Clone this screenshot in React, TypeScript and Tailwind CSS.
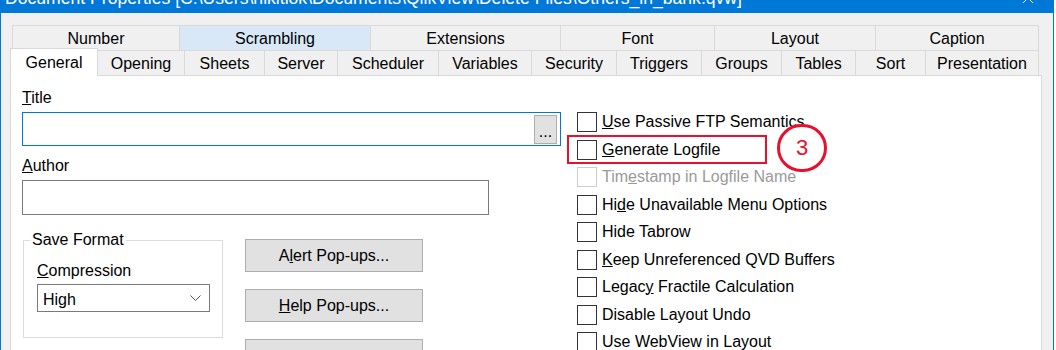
import React from 'react'

const topTabs = [
  { label: 'Number', w: 'w-[167px]' },
  { label: 'Scrambling', w: 'w-[191px]', hover: true },
  { label: 'Extensions', w: 'w-[190px]' },
  { label: 'Font', w: 'w-[154px]' },
  { label: 'Layout', w: 'w-[161px]' },
  { label: 'Caption', w: 'w-[164px]' },
]

const bottomTabs = [
  { label: 'Opening', w: 'w-[86px]' },
  { label: 'Sheets', w: 'w-[80px]' },
  { label: 'Server', w: 'w-[73px]' },
  { label: 'Scheduler', w: 'w-[101px]' },
  { label: 'Variables', w: 'w-[93px]' },
  { label: 'Security', w: 'w-[85px]' },
  { label: 'Triggers', w: 'w-[85px]' },
  { label: 'Groups', w: 'w-[80px]' },
  { label: 'Tables', w: 'w-[74px]' },
  { label: 'Sort', w: 'w-[70px]' },
  { label: 'Presentation', w: 'w-[114px]' },
]

const options = [
  { pre: '', key: 'U', post: 'se Passive FTP Semantics' },
  { pre: '', key: 'G', post: 'enerate Logfile', marked: true },
  { pre: 'Tim', key: 'e', post: 'stamp in Logfile Name', disabled: true },
  { pre: 'Hi', key: 'd', post: 'e Unavailable Menu Options' },
  { pre: 'Hide Tabrow', key: '', post: '' },
  { pre: '', key: 'K', post: 'eep Unreferenced QVD Buffers' },
  { pre: 'Legac', key: 'y', post: ' Fractile Calculation' },
  { pre: 'Disable Layout Undo', key: '', post: '' },
  { pre: 'Use WebView in Layout', key: '', post: '' },
]

// mnemonic underline, like the Win32 dialogs
function Key({ children }: { children: React.ReactNode }) {
  return <span className="underline decoration-1 underline-offset-[1px]">{children}</span>
}

function Button({ children }: { children: React.ReactNode }) {
  return (
    <div className="w-[178px] h-[33px] shrink-0 bg-[#e1e1e1] border border-[#adadad] flex items-center justify-center leading-[20px]">
      {children}
    </div>
  )
}

export default function App() {
  return (
    <div className="w-[1056px] h-[350px] overflow-hidden bg-white text-[16px] text-black font-['Liberation_Sans',Arial,sans-serif]">
      <div className="w-[1054px] h-[350px] flex flex-col bg-[#f0f0f0] border-x border-[#0078d7]">
        {/* title bar, mostly scrolled out of view */}
        <div className="h-[13px] shrink-0 bg-[#0078d7] overflow-hidden flex justify-between text-white">
          <div className="mt-[-12px] pl-[4px] text-[17.6px] leading-[20px] whitespace-nowrap">
            Document Properties [C:\Users\nikitlok\Documents\QlikView\Delete Files\Others_in_bank.qvw]
          </div>
          <svg width="12" height="12" viewBox="0 0 12 12" className="mt-[-8px] mr-[19px]">
            <path d="M1 1 L11 11 M11 1 L1 11" stroke="white" strokeWidth="1" />
          </svg>
        </div>

        {/* tab rows */}
        <div className="pl-[11px] pt-[12px]">
          <div className="flex h-[25px]">
            {topTabs.map((t, i) => (
              <div
                key={t.label}
                className={`${t.w} h-[25px] shrink-0 flex items-center justify-center pt-[2px] leading-[20px] border-t border-l border-[#d9d9d9] ${
                  i === topTabs.length - 1 ? 'border-r' : ''
                } ${t.hover ? 'bg-[#d9e8f7]' : ''}`}
              >
                {t.label}
              </div>
            ))}
          </div>
        </div>
        <div className="pl-[9px] flex h-[25px] relative z-10">
          <div className="w-[88px] h-[28px] -mt-[2px] shrink-0 bg-white border-t border-x border-[#d9d9d9] flex justify-center pt-[4px] leading-[20px]">
            General
          </div>
          {bottomTabs.map((t, i) => (
            <div
              key={t.label}
              className={`${t.w} h-[25px] shrink-0 flex items-center justify-center pt-[2px] leading-[20px] border-t border-[#d9d9d9] ${
                i === 0 ? '' : 'border-l'
              } ${i === bottomTabs.length - 1 ? 'border-r' : ''}`}
            >
              {t.label}
            </div>
          ))}
        </div>

        {/* page body */}
        <div className="ml-[9px] w-[1032px] flex-1 bg-white border border-[#d9d9d9] flex pl-[11px] pt-[12px] leading-[20px]">
          <div className="w-[539px] shrink-0 flex flex-col">
            <div>
              <Key>T</Key>itle
            </div>
            <div className="mt-[4px] h-[34px] border border-[#0078d7] flex justify-end pt-[2px] pr-[3px]">
              <div className="w-[23px] h-[29px] bg-[#e1e1e1] border border-[#adadad] text-center pt-[6px] leading-[20px]">
                ...
              </div>
            </div>
            <div className="mt-[10px]">
              <Key>A</Key>uthor
            </div>
            <div className="mt-[4px] w-[467px] h-[35px] border border-[#7a7a7a]" />

            <div className="flex mt-[15px]">
              <fieldset className="w-[200px] h-[108px] shrink-0 ml-[1px] border border-[#dcdcdc]">
                <legend className="ml-[6px] px-[2px] leading-[20px]">Save Format</legend>
                <div className="pl-[13px] pr-[12px]">
                  <div className="mt-[11px]">
                    <Key>C</Key>ompression
                  </div>
                  <div className="mt-[3px] h-[28px] border border-[#7a7a7a] flex items-center justify-between pl-[5px] pr-[8px] pt-[3px]">
                    <span>High</span>
                    <svg width="11" height="7" viewBox="0 0 11 7" className="-mt-[3px]">
                      <path d="M0.5 0.5 L5.5 5.5 L10.5 0.5" fill="none" stroke="#555" strokeWidth="1" />
                    </svg>
                  </div>
                </div>
              </fieldset>
              <div className="ml-[22px] mt-[9px] flex flex-col gap-[17px]">
                <Button>
                  <span>
                    A<Key>l</Key>ert Pop-ups...
                  </span>
                </Button>
                <Button>
                  <span>
                    <Key>H</Key>elp Pop-ups...
                  </span>
                </Button>
                <Button>
                  <span />
                </Button>
              </div>
            </div>
          </div>

          <div className="pl-[16px] pt-[24px] flex flex-col">
            {options.map((o) => (
              <div key={o.pre + o.key + o.post} className="relative h-[27.5px] shrink-0 flex items-start gap-[5px]">
                <div
                  className={`w-[20px] h-[20px] shrink-0 bg-white border ${
                    o.disabled ? 'border-[#cccccc]' : 'border-[#333333]'
                  }`}
                />
                <span className={`whitespace-nowrap ${o.disabled ? 'text-[#9a9a9a]' : ''}`}>
                  {o.pre}
                  {o.key && <Key>{o.key}</Key>}
                  {o.post}
                </span>
                {o.marked && (
                  <>
                    <div className="absolute -left-[10px] -top-[4.5px] w-[200px] h-[28.5px] border-2 border-[#e8112d]" />
                    <div className="absolute left-[200px] -top-[16px] w-[50px] h-[48px] rounded-full border-[3px] border-[#e8112d] flex items-center justify-center text-[#e8112d] text-[22px] leading-none">
                      3
                    </div>
                  </>
                )}
              </div>
            ))}
          </div>
        </div>
      </div>
    </div>
  )
}
